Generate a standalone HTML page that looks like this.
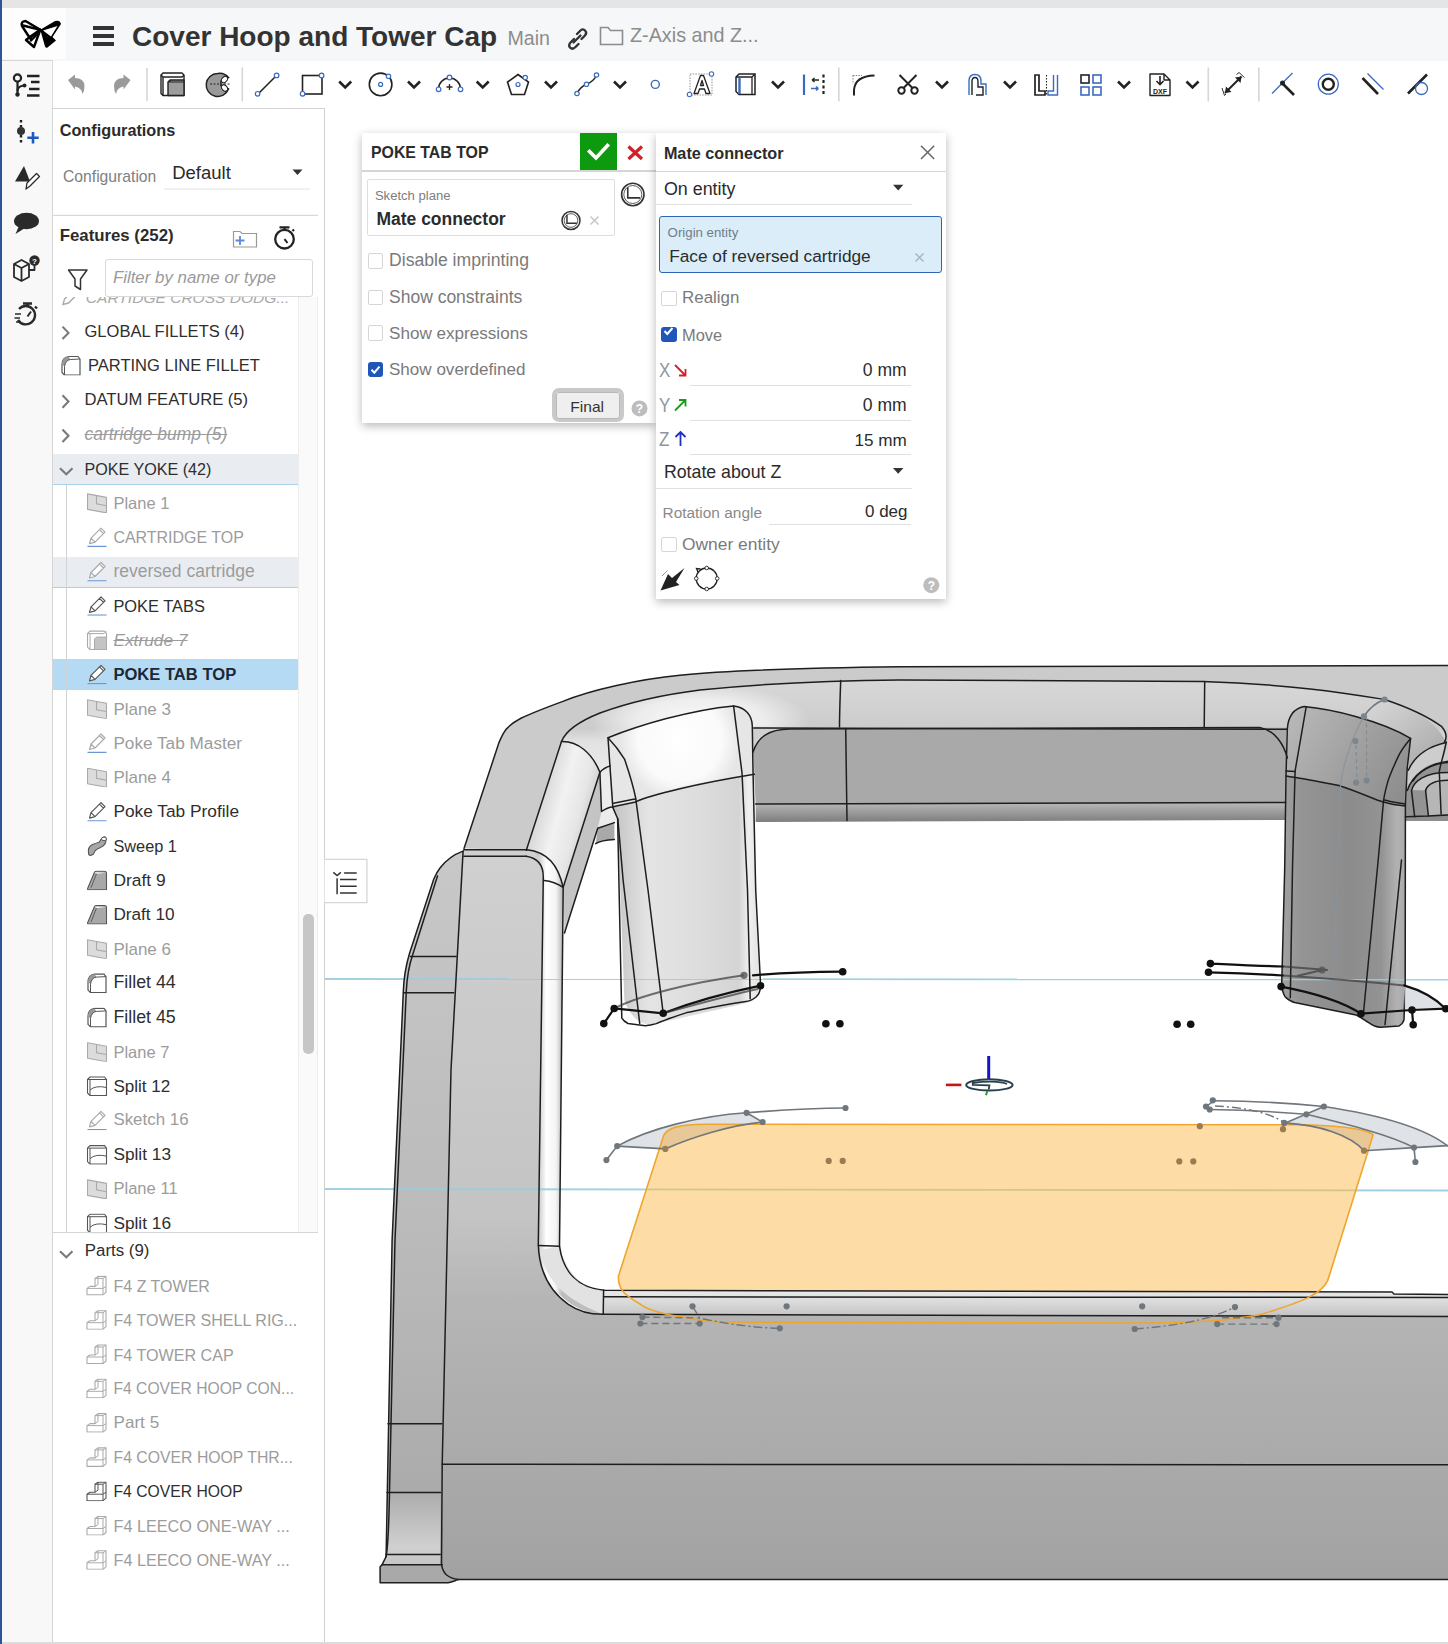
<!DOCTYPE html>
<html><head><meta charset="utf-8"><style>
html,body{margin:0;padding:0;}
body{width:1448px;height:1644px;overflow:hidden;position:relative;background:#fff;font-family:"Liberation Sans",sans-serif;}
.a{position:absolute;box-sizing:border-box;}
.t{position:absolute;white-space:nowrap;line-height:1;}
svg{position:absolute;overflow:visible;}
</style></head><body>
<div class="a" style="left:0px;top:0px;width:1448px;height:8px;background:#e5e5e5;"></div>
<div class="a" style="left:0px;top:8px;width:1448px;height:53px;background:#f6f7f9;"></div>
<div class="a" style="left:2px;top:8px;width:64px;height:51px;background:#fdfdfd;"></div>
<div class="a" style="left:0px;top:60px;width:53px;height:1584px;background:#f8f8f8;border-right:1px solid #dcdcdc;border-top:1px solid #d6d6d6;"></div>
<div class="a" style="left:53px;top:61px;width:1395px;height:48px;background:#fff;"></div>
<div class="a" style="left:52px;top:108px;width:273px;height:1536px;background:#fff;border:1px solid #d4d4d4;border-bottom:none;"></div>
<div class="a" style="left:324px;top:108px;width:1px;height:1536px;background:#d0d0d0;"></div>
<div class="a" style="left:2px;top:1642px;width:1446px;height:2px;background:#dcdcdc;"></div>
<div class="a" style="left:0px;top:0px;width:2px;height:1644px;background:#2c5797;"></div>
<svg style="left:0;top:60px" width="53" height="280" viewBox="0 60 53 280">
<!-- feature tree icon -->
<g fill="none" stroke="#222" stroke-width="2.2">
<circle cx="17.5" cy="78" r="3.6"/>
<path d="M17.5,81.6 L17.5,94.5"/>
<path d="M17.5,91 Q17.5,86 24,85.5" />
</g>
<circle cx="17.5" cy="94.5" r="2.2" fill="#222"/>
<circle cx="24.5" cy="85.5" r="2" fill="#222"/>
<g stroke="#222" stroke-width="2.4">
<path d="M27,76 L39.5,76 M31,82 L39.5,82 M29,89 L39.5,89 M27,95.5 L39.5,95.5"/>
</g>
<!-- config -->
<path d="M21,120 L21,143" stroke="#222" stroke-width="2.4" stroke-dasharray="2.5,2.5"/>
<circle cx="21" cy="131" r="4" fill="#333"/>
<path d="M33,132 L33,143.5 M27.3,137.8 L38.7,137.8" stroke="#1a5ac4" stroke-width="2.6"/>
<!-- triangle + pencil -->
<path d="M24,166 L15,181.5 L30,181.5 Z" fill="#2a2a2a"/>
<path d="M26,189 L27,183 L36.5,173.5 L39.5,176.5 L30,186 Z" fill="#fff" stroke="#2a2a2a" stroke-width="1.3" stroke-linejoin="round"/>
<!-- comment -->
<ellipse cx="26.5" cy="221" rx="12.5" ry="8.3" fill="#2a2a2a"/>
<path d="M19,226 L15.5,234 L25,228 Z" fill="#2a2a2a"/>
<!-- cube ? -->
<g fill="none" stroke="#2a2a2a" stroke-width="1.8" stroke-linejoin="round">
<path d="M14,264 L21.5,260 L29,264 L29,277 L21.5,281 L14,277 Z"/>
<path d="M14,264 L21.5,268 L29,264 M21.5,268 L21.5,281"/>
<path d="M29,270 L34.5,270 L34.5,265"/>
</g>
<circle cx="34.5" cy="260.5" r="5.2" fill="#2a2a2a"/>
<text x="34.5" y="263.8" font-family="Liberation Sans" font-size="8" font-weight="bold" text-anchor="middle" fill="#fff">?</text>
<!-- timer -->
<g fill="none" stroke="#2a2a2a" stroke-width="2.4">
<path d="M19,309 A9.2,9.2 0 1 1 18,320"/>
<path d="M23,303.5 L32,303.5 M27.5,303.5 L27.5,307"/>
<path d="M35,306.5 L37,308.5"/>
</g>
<path d="M27.5,316.5 L31,311.5" stroke="#2a2a2a" stroke-width="2"/>
<path d="M15,314 L21,314 M14.5,318 L20,318 M16,322 L20.5,322" stroke="#2a2a2a" stroke-width="1.4"/>
</svg>
<svg style="left:0;top:0" width="80" height="60" viewBox="0 0 80 60">
<g fill="none" stroke="#000" stroke-width="2.4" stroke-linejoin="round" stroke-linecap="round">
<path d="M22,26 Q20.5,21.5 25.5,21 L40.3,29.8 L29.8,38 Z"/>
<path d="M23,25.5 L40.3,29.8"/>
<path d="M26,40 L30.5,36.5 L40.3,29.8 L34,47 Z"/>
<path d="M30.5,36.5 L31,40.5 L38.5,33"/>
</g>
<path d="M40.3,29.8 L55,21 Q60,19.5 61,24 L52.5,37 L56,40.5 L47.5,47.5 Q46,48.5 45,46.5 Z" fill="#000"/>
<path d="M43,30.5 L57.5,26 L51,36.5 Z" fill="#fff"/>
</svg>
<div class="a" style="left:93px;top:26px;width:21px;height:4px;background:#333;"></div>
<div class="a" style="left:93px;top:34px;width:21px;height:4px;background:#333;"></div>
<div class="a" style="left:93px;top:42px;width:21px;height:4px;background:#333;"></div>
<div class="t" style="left:132px;top:22.5px;font-size:28px;color:#333;font-weight:bold;font-style:normal;">Cover Hoop and Tower Cap</div>
<div class="t" style="left:507.5px;top:29.4px;font-size:19.6px;color:#8c8c8c;font-weight:normal;font-style:normal;">Main</div>
<svg style="left:560px;top:22px" width="32" height="30" viewBox="0 0 32 30">
<g fill="none" stroke="#333" stroke-width="2.4" stroke-linecap="round">
<path d="M17,12 L20,9 Q23,6 25,8.5 Q27.5,11 24.5,14 L21.5,17"/>
<path d="M14,17 L11,20 Q8,23 10,25.5 Q12.5,28 15.5,25 L18.5,22"/>
<path d="M13.5,20.5 L20.5,13.5"/>
</g></svg>
<svg style="left:598px;top:24px" width="28" height="24" viewBox="0 0 28 24">
<path d="M2.5,3.5 L10,3.5 L12.5,6.5 L24.5,6.5 L24.5,20.5 L2.5,20.5 Z" fill="none" stroke="#8c8c8c" stroke-width="1.6"/>
</svg>
<div class="t" style="left:630px;top:25.7px;font-size:19.8px;color:#8c8c8c;font-weight:normal;font-style:normal;">Z-Axis and Z...</div>
<div class="t" style="left:59.7px;top:122.2px;font-size:16.26px;color:#2b2b2b;font-weight:bold;font-style:normal;">Configurations</div>
<div class="t" style="left:63px;top:168.7px;font-size:15.7px;color:#808080;font-weight:normal;font-style:normal;">Configuration</div>
<div class="t" style="left:172.2px;top:163.9px;font-size:18.53px;color:#2b2b2b;font-weight:normal;font-style:normal;">Default</div>
<svg style="left:0;top:0" width="330" height="300" viewBox="0 0 330 300"><path d="M292.5,169.5 L302.5,169.5 L297.5,175 Z" fill="#333"/><rect x="164" y="188.5" width="146" height="1" fill="#e2e2e2"/><rect x="52" y="214.8" width="266" height="1.2" fill="#d8d8d8"/><path d="M233.5,231.5 L240,231.5 L242,233.5 L256.5,233.5 L256.5,247 L233.5,247 Z" fill="none" stroke="#9a9a9a" stroke-width="1.2"/><path d="M240,236 L240,245 M235.5,240.5 L244.5,240.5" stroke="#5a8ad8" stroke-width="1.8"/><g fill="none" stroke="#222" stroke-width="2.3"><circle cx="284.5" cy="239.2" r="9.3"/><path d="M279.5,227.3 L289.5,227.3 M284.5,227.3 L284.5,230"/><path d="M292.5,229.5 L294,231"/></g><path d="M284.5,239.2 L287.5,243" stroke="#222" stroke-width="2"/><path d="M68.5,270 L87,270 L80.5,279 L80.5,289.5 L75,286 L75,279 Z" fill="none" stroke="#333" stroke-width="1.5" stroke-linejoin="round"/></svg>
<div class="t" style="left:59.7px;top:228.2px;font-size:16.81px;color:#2b2b2b;font-weight:bold;font-style:normal;">Features (252)</div>
<div class="a" style="left:105px;top:258.5px;width:208px;height:38px;border:1px solid #d9d9d9;border-radius:3px;background:#fff;"></div>
<div class="t" style="left:112.9px;top:269.7px;font-size:16.86px;color:#9a9a9a;font-weight:normal;font-style:italic;">Filter by name or type</div>
<div class="a" style="left:52.5px;top:453.6px;width:246px;height:30.8px;background:#e9edf1;"></div>
<div class="a" style="left:52.5px;top:484.0px;width:246px;height:1.2px;background:#a9d2ec;"></div>
<div class="a" style="left:52.5px;top:556.5px;width:246px;height:30.8px;background:#e9edf1;"></div>
<div class="a" style="left:52.5px;top:586.9000000000001px;width:246px;height:1.2px;background:#a9d2ec;"></div>
<div class="a" style="left:52.5px;top:659.4px;width:246px;height:30.8px;background:#b5daf4;"></div>
<div class="a" style="left:65.5px;top:485.2px;width:1.1px;height:747.3px;background:#cfd3d6;"></div>
<div class="t" style="left:84.5px;top:323.6px;font-size:16.53px;color:#2e2e2e;font-weight:normal;font-style:normal;">GLOBAL FILLETS (4)</div>
<div class="t" style="left:88px;top:357.9px;font-size:16.52px;color:#2e2e2e;font-weight:normal;font-style:normal;">PARTING LINE FILLET</div>
<div class="t" style="left:84.5px;top:392.1px;font-size:16.61px;color:#2e2e2e;font-weight:normal;font-style:normal;">DATUM FEATURE (5)</div>
<div class="t" style="left:84.5px;top:425.7px;font-size:17.48px;color:#9c9c9c;font-weight:normal;font-style:italic;text-decoration:line-through;">cartridge bump (5)</div>
<div class="t" style="left:84.5px;top:461.2px;font-size:16.12px;color:#2e2e2e;font-weight:normal;font-style:normal;">POKE YOKE (42)</div>
<div class="t" style="left:113.4px;top:495.1px;font-size:16.51px;color:#9c9c9c;font-weight:normal;font-style:normal;">Plane 1</div>
<div class="t" style="left:113.4px;top:529.9px;font-size:15.98px;color:#9c9c9c;font-weight:normal;font-style:normal;">CARTRIDGE TOP</div>
<div class="t" style="left:113.4px;top:562.8px;font-size:17.55px;color:#9c9c9c;font-weight:normal;font-style:normal;">reversed cartridge</div>
<div class="t" style="left:113.4px;top:598.1px;font-size:16.43px;color:#2e2e2e;font-weight:normal;font-style:normal;">POKE TABS</div>
<div class="t" style="left:113.4px;top:631.6px;font-size:17.34px;color:#9c9c9c;font-weight:normal;font-style:italic;text-decoration:line-through;">Extrude 7</div>
<div class="t" style="left:113.4px;top:666.6px;font-size:16.59px;color:#1c2833;font-weight:bold;font-style:normal;">POKE TAB TOP</div>
<div class="t" style="left:113.4px;top:700.5px;font-size:16.98px;color:#9c9c9c;font-weight:normal;font-style:normal;">Plane 3</div>
<div class="t" style="left:113.4px;top:734.6px;font-size:17.21px;color:#9c9c9c;font-weight:normal;font-style:normal;">Poke Tab Master</div>
<div class="t" style="left:113.4px;top:769.1px;font-size:16.98px;color:#9c9c9c;font-weight:normal;font-style:normal;">Plane 4</div>
<div class="t" style="left:113.4px;top:803.1px;font-size:17.31px;color:#2e2e2e;font-weight:normal;font-style:normal;">Poke Tab Profile</div>
<div class="t" style="left:113.4px;top:838.3px;font-size:16.34px;color:#2e2e2e;font-weight:normal;font-style:normal;">Sweep 1</div>
<div class="t" style="left:113.4px;top:871.7px;font-size:17.4px;color:#2e2e2e;font-weight:normal;font-style:normal;">Draft 9</div>
<div class="t" style="left:113.4px;top:906.1px;font-size:17.21px;color:#2e2e2e;font-weight:normal;font-style:normal;">Draft 10</div>
<div class="t" style="left:113.4px;top:940.6px;font-size:16.98px;color:#9c9c9c;font-weight:normal;font-style:normal;">Plane 6</div>
<div class="t" style="left:113.4px;top:974.2px;font-size:17.82px;color:#2e2e2e;font-weight:normal;font-style:normal;">Fillet 44</div>
<div class="t" style="left:113.4px;top:1008.5px;font-size:17.82px;color:#2e2e2e;font-weight:normal;font-style:normal;">Fillet 45</div>
<div class="t" style="left:113.4px;top:1043.9px;font-size:16.51px;color:#9c9c9c;font-weight:normal;font-style:normal;">Plane 7</div>
<div class="t" style="left:113.4px;top:1077.8px;font-size:17.06px;color:#2e2e2e;font-weight:normal;font-style:normal;">Split 12</div>
<div class="t" style="left:113.4px;top:1112.2px;font-size:16.91px;color:#9c9c9c;font-weight:normal;font-style:normal;">Sketch 16</div>
<div class="t" style="left:113.4px;top:1146.2px;font-size:17.27px;color:#2e2e2e;font-weight:normal;font-style:normal;">Split 13</div>
<div class="t" style="left:113.4px;top:1181.1px;font-size:16.58px;color:#9c9c9c;font-weight:normal;font-style:normal;">Plane 11</div>
<div class="t" style="left:113.4px;top:1214.8px;font-size:17.27px;color:#2e2e2e;font-weight:normal;font-style:normal;">Split 16</div>
<svg style="left:0;top:0" width="330" height="1644" viewBox="0 0 330 1644"><defs>
<symbol id="i_chev" viewBox="0 0 21 20"><path d="M2.5,3.5 L8.5,9.8 L2.5,16" fill="none" stroke="#7a7a7a" stroke-width="2.1"/></symbol>
<symbol id="i_chevd" viewBox="0 0 21 20"><path d="M1,8 L7.3,14 L13.5,8" fill="none" stroke="#7a7a7a" stroke-width="2.1"/></symbol>
<symbol id="i_fillet" viewBox="0 0 21 20"><path d="M1.5,17 L1.5,9 Q1.5,2 8,1 L17.5,1 L19.5,3.5 L19.5,19.5 L4,19.5 Z" fill="#fff" stroke="#555" stroke-width="1.2" stroke-linejoin="round"/><path d="M1.5,9 Q1.5,2 8,1 L10,4 Q5,5 4,11 Z" fill="#999"/><path d="M4,19.5 L4,11 Q5,4.5 10,4 L19.5,3.5" fill="none" stroke="#555" stroke-width="1"/></symbol>
<symbol id="i_plane" viewBox="0 0 21 20"><path d="M1,1 L20,4.5 L20,20 L1,16.5 Z" fill="#dcdcdc" stroke="#aaa" stroke-width="1.1" stroke-linejoin="round"/><path d="M10,2.8 L10,11 L20,12.8" fill="none" stroke="#aaa" stroke-width="1.1"/></symbol>
<symbol id="i_pencil" viewBox="0 0 21 20"><path d="M3,16.5 L4.5,11 L14.5,1 L18.5,5 L8.5,15 Z M4.5,11 L8.5,15 M13,2.5 L17,6.5" fill="#fff" stroke="currentColor" stroke-width="1.2" stroke-linejoin="round"/><path d="M1,19.3 L20,19.3" stroke="#6b97d6" stroke-width="1.3"/></symbol>
<symbol id="i_extrude" viewBox="0 0 21 20"><path d="M1,3.5 L3.5,1 L17.5,1 L20,3.5 L20,19.5 L3.5,19.5 L1,17 Z" fill="#fff" stroke="#aaa" stroke-width="1.1"/><path d="M1,3.5 L17.5,3.5 L20,1 M3.5,3.5 L3.5,19.5" fill="none" stroke="#aaa" stroke-width="1"/><path d="M8,9 L10,7 L20,7 L20,19.5 L8,19.5 Z" fill="#c4c4c4" stroke="#aaa" stroke-width="1"/></symbol>
<symbol id="i_sweep" viewBox="0 0 21 20"><path d="M2,17 Q1,11 6,8.5 Q10,7 13,6 Q14.5,2 17.5,1 Q20,1 19.5,4 Q19.5,9 14,11.5 Q10,13 8.5,15 Q7,19.5 4,19.5 Q2,19.5 2,17 Z" fill="#a6a6a6" stroke="#555" stroke-width="1.1"/><ellipse cx="17.5" cy="3" rx="2.5" ry="1.8" fill="#fff" stroke="#555" stroke-width="1"/></symbol>
<symbol id="i_draft" viewBox="0 0 21 20"><path d="M1,18.5 L8,2 Q8.5,1 10,1 L18,1 Q20,1 20,3 L20,19.5 L3,19.5 Q0.5,19.5 1,18.5 Z" fill="#a8a8a8" stroke="#555" stroke-width="1.1" stroke-linejoin="round"/><path d="M8,2 L19.5,2.5 L10,3.5 Z" fill="#fff"/><path d="M4.5,17.5 L10,3.5" stroke="#555" stroke-width="0.9"/></symbol>
<symbol id="i_split" viewBox="0 0 21 20"><path d="M1,3.5 L3.5,1 L18,1 L20,3.5 L20,19.5 L3.5,19.5 L1,17 Z" fill="#fff" stroke="#555" stroke-width="1.1"/><path d="M1,3.5 L20,3.5 M3.5,3.5 L3.5,19.5 M3.5,14 Q9,9 20,11.5" fill="none" stroke="#555" stroke-width="1"/></symbol>
<symbol id="i_part" viewBox="0 0 21 20"><path d="M1,13 L4,11 L9,11 L9,3 L12,1 L20,1 L20,17 L17,19.5 L1,19.5 Z" fill="#fff" stroke="currentColor" stroke-width="1.1" stroke-linejoin="round"/><path d="M1,13 L17,13 M17,13 L17,19.5 M17,13 L20,11 M9,11 L12,9 L12,3.5 M12,1 L12,3.5 M9,3 L17,3 L20,1 M17,3 L17,13" fill="none" stroke="currentColor" stroke-width="1"/></symbol>
</defs><use href="#i_chev" x="60" y="323.1" width="21" height="20"/><use href="#i_fillet" x="60.5" y="355.50000000000006" width="21" height="20" style="color:#555"/><use href="#i_chev" x="60" y="391.70000000000005" width="21" height="20"/><use href="#i_chev" x="60" y="426.0" width="21" height="20"/><use href="#i_chevd" x="59" y="460.3" width="21" height="20"/><use href="#i_plane" x="86.5" y="492.90000000000003" width="21" height="20" style="color:#aaa"/><use href="#i_pencil" x="86.5" y="527.1999999999999" width="21" height="20" style="color:#aaa"/><use href="#i_pencil" x="86.5" y="561.5" width="21" height="20" style="color:#aaa"/><use href="#i_pencil" x="86.5" y="595.8" width="21" height="20" style="color:#555"/><use href="#i_extrude" x="86.5" y="630.0999999999999" width="21" height="20" style="color:#aaa"/><use href="#i_pencil" x="86.5" y="664.4" width="21" height="20" style="color:#555"/><use href="#i_plane" x="86.5" y="698.6999999999999" width="21" height="20" style="color:#aaa"/><use href="#i_pencil" x="86.5" y="733.0" width="21" height="20" style="color:#aaa"/><use href="#i_plane" x="86.5" y="767.3" width="21" height="20" style="color:#aaa"/><use href="#i_pencil" x="86.5" y="801.5999999999999" width="21" height="20" style="color:#555"/><use href="#i_sweep" x="86.5" y="835.9" width="21" height="20" style="color:#555"/><use href="#i_draft" x="86.5" y="870.1999999999999" width="21" height="20" style="color:#555"/><use href="#i_draft" x="86.5" y="904.4999999999999" width="21" height="20" style="color:#555"/><use href="#i_plane" x="86.5" y="938.8" width="21" height="20" style="color:#aaa"/><use href="#i_fillet" x="86.5" y="973.0999999999999" width="21" height="20" style="color:#555"/><use href="#i_fillet" x="86.5" y="1007.4" width="21" height="20" style="color:#555"/><use href="#i_plane" x="86.5" y="1041.7" width="21" height="20" style="color:#aaa"/><use href="#i_split" x="86.5" y="1075.9999999999998" width="21" height="20" style="color:#555"/><use href="#i_pencil" x="86.5" y="1110.3" width="21" height="20" style="color:#aaa"/><use href="#i_split" x="86.5" y="1144.6" width="21" height="20" style="color:#555"/><use href="#i_plane" x="86.5" y="1178.8999999999999" width="21" height="20" style="color:#aaa"/><use href="#i_split" x="86.5" y="1213.2" width="21" height="20" style="color:#555"/></svg>
<div class="a" style="left:53px;top:296.5px;width:245px;height:12px;overflow:hidden"><svg style="left:7px;top:-9px" width="24" height="24" viewBox="0 0 24 24"><path d="M3,16.5 L4.5,11 L14.5,1 L18.5,5 L8.5,15 Z" fill="#fff" stroke="#aaa" stroke-width="1.4"/></svg><div class="t" style="left:32.8px;top:-6.1px;font-size:15.56px;color:#aaa;font-weight:normal;font-style:italic;">CARTIDGE CROSS DODG...</div>
</div>
<div class="a" style="left:298px;top:296.5px;width:19.5px;height:936px;background:#fafafa;border-left:1px solid #ececec;border-right:1px solid #ececec;"></div>
<div class="a" style="left:303px;top:913.5px;width:10.5px;height:140px;background:#c6c6c6;border-radius:5px;"></div>
<div class="a" style="left:52.5px;top:1232.3px;width:265.5px;height:1.2px;background:#d4d4d4;"></div>
<svg style="left:0;top:0" width="330" height="1644" viewBox="0 0 330 1644"><use href="#i_chevd" x="59" y="1243.2" width="21" height="20"/><use href="#i_part" x="86" y="1275.3999999999999" width="21" height="20" style="color:#aaa"/><use href="#i_part" x="86" y="1309.6999999999998" width="21" height="20" style="color:#aaa"/><use href="#i_part" x="86" y="1343.9999999999998" width="21" height="20" style="color:#aaa"/><use href="#i_part" x="86" y="1378.3" width="21" height="20" style="color:#aaa"/><use href="#i_part" x="86" y="1412.6" width="21" height="20" style="color:#aaa"/><use href="#i_part" x="86" y="1446.8999999999999" width="21" height="20" style="color:#aaa"/><use href="#i_part" x="86" y="1481.1999999999998" width="21" height="20" style="color:#555"/><use href="#i_part" x="86" y="1515.4999999999998" width="21" height="20" style="color:#aaa"/><use href="#i_part" x="86" y="1549.8" width="21" height="20" style="color:#aaa"/></svg>
<div class="t" style="left:84.8px;top:1243.4px;font-size:16.85px;color:#2e2e2e;font-weight:normal;font-style:normal;">Parts (9)</div>
<div class="t" style="left:113.5px;top:1278.0px;font-size:16.03px;color:#9c9c9c;font-weight:normal;font-style:normal;">F4 Z TOWER</div>
<div class="t" style="left:113.5px;top:1312.3px;font-size:16.08px;color:#9c9c9c;font-weight:normal;font-style:normal;">F4 TOWER SHELL RIG...</div>
<div class="t" style="left:113.5px;top:1346.5px;font-size:16.13px;color:#9c9c9c;font-weight:normal;font-style:normal;">F4 TOWER CAP</div>
<div class="t" style="left:113.5px;top:1381.2px;font-size:15.67px;color:#9c9c9c;font-weight:normal;font-style:normal;">F4 COVER HOOP CON...</div>
<div class="t" style="left:113.5px;top:1414.3px;font-size:17.13px;color:#9c9c9c;font-weight:normal;font-style:normal;">Part 5</div>
<div class="t" style="left:113.5px;top:1449.7px;font-size:15.8px;color:#9c9c9c;font-weight:normal;font-style:normal;">F4 COVER HOOP THR...</div>
<div class="t" style="left:113.5px;top:1484.1px;font-size:15.71px;color:#2e2e2e;font-weight:normal;font-style:normal;">F4 COVER HOOP</div>
<div class="t" style="left:113.5px;top:1518.0px;font-size:16.23px;color:#9c9c9c;font-weight:normal;font-style:normal;">F4 LEECO ONE-WAY ...</div>
<div class="t" style="left:113.5px;top:1552.3px;font-size:16.23px;color:#9c9c9c;font-weight:normal;font-style:normal;">F4 LEECO ONE-WAY ...</div>
<svg style="left:0;top:0" width="1448" height="1644" viewBox="0 0 1448 1644">
<defs>
<linearGradient id="gFront" x1="0" y1="1316" x2="0" y2="1580" gradientUnits="userSpaceOnUse">
<stop offset="0" stop-color="#c6c6c6"/><stop offset="0.55" stop-color="#aaaaaa"/><stop offset="1" stop-color="#a2a2a2"/></linearGradient>
<linearGradient id="gPillar" x1="0" y1="850" x2="0" y2="1580" gradientUnits="userSpaceOnUse">
<stop offset="0" stop-color="#d0d0d0"/><stop offset="0.5" stop-color="#c4c4c4"/><stop offset="0.62" stop-color="#b5b5b5"/><stop offset="1" stop-color="#a2a2a2"/></linearGradient>
<linearGradient id="gSide" x1="0" y1="850" x2="0" y2="1580" gradientUnits="userSpaceOnUse">
<stop offset="0" stop-color="#c8c8c8"/><stop offset="0.6" stop-color="#b8b8b8"/><stop offset="1" stop-color="#a5a5a5"/></linearGradient>
<linearGradient id="gLipV" x1="538" y1="0" x2="562" y2="0" gradientUnits="userSpaceOnUse">
<stop offset="0" stop-color="#c8c8c8"/><stop offset="0.35" stop-color="#ffffff"/><stop offset="0.75" stop-color="#f4f4f4"/><stop offset="1" stop-color="#bdbdbd"/></linearGradient>
<linearGradient id="gLipH" x1="0" y1="1292" x2="0" y2="1317" gradientUnits="userSpaceOnUse">
<stop offset="0" stop-color="#e8e8e8"/><stop offset="0.4" stop-color="#dadada"/><stop offset="1" stop-color="#c2c2c2"/></linearGradient>
<linearGradient id="gBackStrip" x1="0" y1="803" x2="0" y2="821" gradientUnits="userSpaceOnUse">
<stop offset="0" stop-color="#b8b8b8"/><stop offset="1" stop-color="#808080"/></linearGradient>
<linearGradient id="gRim" x1="0" y1="680" x2="0" y2="780" gradientUnits="userSpaceOnUse">
<stop offset="0" stop-color="#d8d8d8"/><stop offset="0.25" stop-color="#d2d2d2"/><stop offset="0.48" stop-color="#cbcbcb"/><stop offset="0.62" stop-color="#e2e2e2"/><stop offset="1" stop-color="#ececec"/></linearGradient>
<radialGradient id="gRimHi" cx="700" cy="722" r="110" gradientTransform="translate(700 722) scale(1 0.35) translate(-700 -722)" gradientUnits="userSpaceOnUse">
<stop offset="0" stop-color="#ffffff" stop-opacity="0.95"/><stop offset="0.6" stop-color="#ffffff" stop-opacity="0.6"/><stop offset="1" stop-color="#ffffff" stop-opacity="0"/></radialGradient>
<linearGradient id="gTowerL" x1="612" y1="0" x2="756" y2="0" gradientUnits="userSpaceOnUse">
<stop offset="0" stop-color="#c2c2c2"/><stop offset="0.25" stop-color="#e4e4e4"/><stop offset="0.6" stop-color="#dddddd"/><stop offset="0.88" stop-color="#d4d4d4"/><stop offset="0.95" stop-color="#f0f0f0"/><stop offset="1" stop-color="#e6e6e6"/></linearGradient>
<linearGradient id="gTowerR" x1="1282" y1="0" x2="1406" y2="0" gradientUnits="userSpaceOnUse">
<stop offset="0" stop-color="#a2a2a2"/><stop offset="0.15" stop-color="#949494"/><stop offset="0.55" stop-color="#8c8c8c"/><stop offset="0.8" stop-color="#939393"/><stop offset="0.93" stop-color="#b2b2b2"/><stop offset="1" stop-color="#a8a8a8"/></linearGradient>
<linearGradient id="gRimL" x1="530" y1="820" x2="585" y2="835" gradientUnits="userSpaceOnUse">
<stop offset="0" stop-color="#d2d2d2"/><stop offset="0.45" stop-color="#f2f2f2"/><stop offset="0.8" stop-color="#e6e6e6"/><stop offset="1" stop-color="#cfcfcf"/></linearGradient>
<linearGradient id="gFoot" x1="0" y1="1492" x2="0" y2="1565" gradientUnits="userSpaceOnUse">
<stop offset="0" stop-color="#acacac"/><stop offset="0.75" stop-color="#d0d0d0"/><stop offset="1" stop-color="#c4c4c4"/></linearGradient>
<linearGradient id="gRStr" x1="1385" y1="705" x2="1440" y2="775" gradientUnits="userSpaceOnUse">
<stop offset="0" stop-color="#d2d2d2"/><stop offset="1" stop-color="#a4a4a4"/></linearGradient>
<linearGradient id="gTowerRTop" x1="1290" y1="715" x2="1405" y2="790" gradientUnits="userSpaceOnUse">
<stop offset="0" stop-color="#b8b8b8"/><stop offset="0.5" stop-color="#a2a2a2"/><stop offset="1" stop-color="#8e8e8e"/></linearGradient>
<radialGradient id="gTopL" cx="680" cy="740" r="60" gradientUnits="userSpaceOnUse">
<stop offset="0" stop-color="#ffffff"/><stop offset="0.7" stop-color="#fafafa"/><stop offset="1" stop-color="#e6e6e6"/></radialGradient>
<clipPath id="cOrange"><path d="M663.5,1136 C667,1128 678,1124.3 705,1124.2 L1297.4,1124.7 C1330,1125 1365,1128 1373.1,1134.9 L1327.7,1280.6 C1322,1292 1310,1300 1259.6,1314.7 C1230,1320 1210,1322.2 1150,1323 L720.5,1322 C680,1318 650,1312 640.4,1304.3 C625,1295 618,1290 618.4,1276.3 Z"/></clipPath>
<clipPath id="cOpen"><path d="M559.5,887 L1448,818 L1448,1291.5 L1394,1291.5 L604.4,1290.3 C585,1289 570,1280 559.5,1246.2 Z"/></clipPath>
</defs>
<path d="M1448,665.5 L900,666.8 C800,668 720,671 680,675.2 C640,679 590,690 562.9,701.4 C545,708 530,714 521.4,718 C512,723 506,728 503.5,733.2 C501,738 499.5,741 498.5,744 L464,848.5 L526.3,850.3 L561.5,741.5 C566,730 580,721 600,713 C630,702 660,695 700,690 C760,684 830,680.5 900,680 L1202.8,681.6 C1290,684 1350,694 1384.6,699.5 C1410,708 1430,718 1441.8,726.7 C1447,733 1447,738 1444.4,742.3 L1448,750 Z" fill="#cbcbcb"/>
<path d="M561.5,741.5 C566,730 580,721 600,713 C630,702 660,695 700,690 C760,684 830,680.5 900,680 L1202.8,681.6 C1290,684 1350,694 1384.6,699.5 C1410,708 1430,718 1441.8,726.7 C1447,733 1447,738 1444.4,742.3 L1448,750 L1448,820 L1286,820 L1286,738 L1259.6,729 L756.6,728 L753,725 L608,737.7 L612.8,807.4 L617.6,818.5 L614.4,822.6 L597.8,828.2 L563.2,887.3 C561,872 553,858 527,850.3 Z" fill="url(#gRim)"/>
<path d="M561.5,741.5 C578,741 592,753 599.9,772.2 L563.2,887.3 C561,872 553,858 527,850.3 Z" fill="url(#gRimL)"/>
<path d="M561.5,741.5 C566,730 580,721 600,713 C630,702 660,695 700,690 C760,684 830,680.5 900,680 L900,728 L756.6,728 L608,737.7 L600,760 Z" fill="url(#gRimHi)"/>
<path d="M563.2,932 L596,843 L615,835 L754,821 L1448,818 L1448,1294 L604.4,1290.3 C585,1289 570,1280 559.5,1246.2 L560,930 Z" fill="#ffffff"/>
<path d="M752,726.5 L795,728 C775,729 760,735 753,754 Z" fill="#d0d0d0"/>
<path d="M753,752 C760,735 770,729.4 790,729 L1286,727.8 L1286,803 L755.7,804.6 Z" fill="#a9a9a9"/>
<path d="M755.7,803.3 L1286,802.5 L1286,820 L755.7,822 Z" fill="url(#gBackStrip)"/>
<path d="M597.8,828.2 L614.4,822.6 L614.4,839.6 C607,840 600,841 595.7,843.7 Z" fill="#a9a9a9"/>
<path d="M563.2,887.3 L599.9,772.2 L601.5,811.5 L597.8,828.2 L564.5,933 Z" fill="#c4c4c4"/>
<path d="M463.1,851.1 C455,854 446,860 440,868 C438,870.5 436,874 433.8,879 L409.4,953.8 C407,962 404,975 403.4,990 L392.1,1240.2 L386.1,1556.6 L382.1,1564.7 L380.1,1566.7 L380.1,1582.7 L448.2,1582.7 L441.5,1564.7 L442.2,1464.5 L451,1070 Z" fill="url(#gSide)"/>
<path d="M387,1492.6 L440.5,1492.6 L440.2,1564.7 L382.1,1564.7 L386.1,1556.6 Z" fill="url(#gFoot)"/>
<path d="M382.1,1564.7 L442.2,1564.7 C446,1574 452,1578.5 460,1579.6 L455,1580.5 C452,1582 450,1582.7 448.2,1582.7 L380.1,1582.7 L380.1,1566.7 Z" fill="#a9a9a9"/>
<path d="M463.9,849.7 L527,849.7 C545,852 543.3,862 543.3,877 L538.3,1244.2 C540,1270 548,1290 568.3,1304.3 C580,1312 590,1314.3 602.4,1314.3 L1448,1316.6 L1448,1579.6 L458,1579.6 C450,1578 443,1572 441.5,1564.7 L442.2,1464.5 L451,1070 L463.1,851.1 Z" fill="url(#gPillar)"/>
<path d="M527,849.7 C547.7,852 558,865 563.2,887.3 L559.5,1246.2 C565,1275 580,1288 604.4,1290.3 L1448,1294 L1448,1316.6 L602.4,1314.3 C580,1313 560,1300 548,1280 C541,1265 538.3,1255 538.3,1244.2 L543.3,877 C543,860 537,852 527,849.7 Z" fill="url(#gLipV)"/>
<path d="M603.6,1290.3 L1448,1294 L1448,1316.6 L603.6,1314.3 Z" fill="url(#gLipH)"/>
<path d="M540,1250 C545,1280 565,1300 603.6,1314.3 L603.6,1290.3 C585,1288 568,1278 559.5,1246.2 Z" fill="#e2e2e2"/>
<path d="M608,737.7 C640,725 690,710 733.6,705.9 C745,707 752,715 752.3,725.9 L753,770 L755.7,890 L760.6,988.5 C760,998 752,1002 748.6,1002.5 L652.5,1024.5 C642,1025 632,1020 624.4,1000.5 L617.6,818.5 L612.8,807.4 Z" fill="url(#gTowerL)"/>
<path d="M608,737.7 C640,725 690,710 733.6,705.9 C745,707 752,715 752.3,725.9 L754.4,774.3 C700,782 660,790 635.6,801.9 L613.5,806.7 Z" fill="url(#gTopL)"/>
<path d="M1287.3,729.3 C1288,718 1292,709 1304.1,706.6 C1330,709 1380,720 1410.6,738.4 L1407.2,768.7 L1405.4,806 L1405.2,983 L1404,1019.8 C1403.5,1022 1402,1024 1399.1,1026 L1380.6,1027.2 C1376,1027 1372,1025 1368.3,1022.3 C1366,1021 1362,1018 1356,1014.9 L1294.6,1002.6 C1292,1002 1290,1001 1286,997.7 C1285,997 1282,992 1281.7,985.4 L1284.7,868 L1286,776 Z" fill="url(#gTowerR)"/>
<path d="M1287.3,729.3 C1288,718 1292,709 1304.1,706.6 C1330,709 1380,720 1410.6,738.4 L1407.2,768.7 L1405.4,806 C1400,805.5 1390,804 1383.3,802 C1375,800 1360,792 1337.9,785.2 C1320,782 1300,778 1286,776.1 Z" fill="url(#gTowerRTop)"/>
<path d="M1410.6,738.4 L1363.9,716.4 L1384.6,699.5 C1410,706 1435,720 1446.2,742 L1448,742 L1448,820 L1405,820 Z" fill="url(#gRStr)"/>
<path d="M1408.3,770.3 C1415,755 1430,746 1446.2,742.5 L1448,742.5 L1448,761.2 C1430,762 1416,768 1407.4,790.4 Z" fill="#cdcdcd"/>
<path d="M1407.4,790.4 C1412,775 1428,764 1448,761.2 L1448,817 L1405.5,817 Z" fill="#939393"/>
<path d="M1412,790 C1418,777 1430,772.5 1448,772.6 L1448,780.3 C1435,780.5 1428,785 1425.6,790.4 Z" fill="#c4c4c4"/>
<path d="M1425.6,790.4 C1428,783 1436,780.3 1448,780.3 L1448,816 L1428.4,816 Z" fill="#b6b6b6"/>
<path d="M1405,816.5 L1448,814 L1448,821 L1405,821 Z" fill="#8e8e8e"/>
<path d="M325,979 L1448,979.5" stroke="#98cde0" stroke-width="1.8" opacity="0.9"/>
<path d="M325,1189 L1448,1190.5" stroke="#98cde0" stroke-width="1.8" opacity="0.9"/>
<g clip-path="url(#cOpen)"><path d="M663.5,1136 C667,1128 678,1124.3 705,1124.2 L1297.4,1124.7 C1330,1125 1365,1128 1373.1,1134.9 L1327.7,1280.6 C1322,1292 1310,1300 1259.6,1314.7 C1230,1320 1210,1322.2 1150,1323 L720.5,1322 C680,1318 650,1312 640.4,1304.3 C625,1295 618,1290 618.4,1276.3 Z" fill="#fddca6"/><g clip-path="url(#cOrange)"><path d="M325,1189 L1448,1190.5" stroke="#d4c58e" stroke-width="1.8"/></g></g>
</svg>
<svg style="left:0;top:0" width="1448" height="1644" viewBox="0 0 1448 1644">
<g fill="none" stroke="#1e1e1e" stroke-width="1.5" stroke-linejoin="round" stroke-linecap="round">
<path d="M1448,665.5 L900,666.8 C800,668 720,671 680,675.2 C640,679 590,690 562.9,701.4 C545,708 530,714 521.4,718 C512,723 506,728 503.5,733.2 C501,738 499.5,741 498.5,744 L464,848.5"/>
<path d="M526.3,850.3 L561.5,741.5 C566,730 580,721 600,713 C630,702 660,695 700,690 C760,684 830,680.5 900,680 L1202.8,681.6 C1290,684 1350,694 1384.6,699.5 C1410,708 1430,718 1441.8,726.7 C1447,733 1447,738 1444.4,742.3"/>
<path d="M840.7,680.5 C840,700 839.5,715 839.5,727"/>
<path d="M1204.7,681.6 L1204.2,727.5"/>
<path d="M753,752 C758,737 768,729.4 790,729 L1259.6,727.4 C1275,730 1284,745 1287.3,757.9"/>
<path d="M753.8,728 L1287.3,729.3"/>
<path d="M755.7,804 L1285.5,802.5"/>
<path d="M845.7,728.5 C846.5,770 846.5,800 847,820.5"/>
<path d="M463.9,849.7 L527,849.7"/>
<path d="M463.9,856.3 L526.1,856.3"/>
<path d="M526.1,856.3 C538,858 543.3,866 543.3,877 L538.3,1244.2 C539,1268 548,1290 568.3,1304.3 C578,1311 590,1314.3 602.4,1314.3 L1448,1316.6"/>
<path d="M527,849.7 C547.7,852 558,865 563.2,887.3 L559.5,1246.2 C563,1272 578,1288 604.4,1290.3 L1392,1292 L1394,1294 L1448,1294.5"/>
<path d="M544.2,880.4 C550,881 556,882.5 563.2,887.3"/>
<path d="M538.3,1245.6 L559.5,1246.2"/>
<path d="M603.6,1290.3 L603.2,1314.3"/>
<path d="M604,1296.8 L1448,1297.5"/>
<path d="M463.1,851.1 C455,854 446,860 440,868 C438,870.5 436,874 433.8,879 L409.4,953.8 C407,962 404,975 403.4,990 L392.1,1240.2 L386.1,1556.6 L382.1,1564.7 L380.1,1566.7 L380.1,1582.7 L448.2,1582.7 C453,1582 456,1580 458.5,1579.6 L1448,1579.6"/>
<path d="M437.5,876 L412.6,955 C409.5,964 407,977 406.3,991 L395,1240.2 L389.5,1492 C389,1520 388.3,1545 386.1,1556.6"/>
<path d="M382.1,1564.7 L442.2,1564.7"/>
<path d="M561.5,741.5 C578,741 592,753 599.9,772.2"/>
<path d="M463.1,851.1 L451,1070 L442.2,1464.5 L441.5,1564.7 C443,1574 448,1578 458.5,1579.6"/>
<path d="M410.4,956.4 L456.1,956.4"/>
<path d="M403.5,992.7 L453.6,992.7"/>
<path d="M388,1423.7 L441.9,1423.7"/>
<path d="M387,1492.6 L440.5,1492.6"/>
<path d="M386.1,1554.6 L440.2,1554.6"/>
<path d="M442.2,1464.2 L1448,1464.8"/>
<path d="M563.2,887.3 L599.9,772.2 C602,770 606,767 610.2,766"/>
<path d="M564.5,933 L597.5,829"/>
<path d="M599.9,772.2 L601.5,811.5 C605,809 609,807 612.8,806.9"/>
<path d="M597.8,828.2 L614.4,822.6"/>
<path d="M595.7,843.7 C600,841 607,840 614.4,839.6"/>
<path d="M608,737.7 C640,725 690,710 733.6,705.9 C745,707 752,715 752.3,725.9 L753,770 L755.7,890 L760.6,985 C760.5,992 758.5,995 756,997 C752,1000 748,1001.5 746,1001.5 C720,1005 700,1010 686.7,1012.6 C670,1018 660,1022 656.3,1023.6 C650,1025.5 645,1025.7 645.2,1025.7 L628,1023.5 C623,1021 621.8,1018 621.8,1018.1 L617.6,818.5 L612.8,807.4 L608,737.7"/>
<path d="M608,737.7 C615,745 622,755 624.5,759.1 C630,775 634,790 635.6,797.7 L648,890 L663.2,1013.3"/>
<path d="M733.6,705.9 L742,772.9 L747.5,890 L750.2,998.8"/>
<path d="M613.5,806.7 C620,805 630,803 635.6,801.9 C650,795 700,783 754.4,774.3"/>
<path d="M613.5,803.3 C620,802 630,800 635.6,799.1"/>
<path d="M617.8,818.5 L623.1,880 L639.7,1023.6"/>
<path d="M1287.3,729.3 C1288,718 1292,709 1304.1,706.6 C1330,709 1380,720 1410.6,738.4 C1405,745 1400,752 1397.6,757.9 C1392,770 1388,780 1387.2,783.9 C1385,792 1383.5,800 1383.3,803.3 L1378.2,860 L1363.4,1013.7"/>
<path d="M1287.3,729.3 L1286,776 L1284.7,868 L1281.7,985.4 C1282,992 1285,997 1286,997.7 C1290,1001 1292,1002 1294.6,1002.6 L1325.3,1008.7 L1356,1014.9 C1362,1018 1366,1021 1368.3,1022.3 C1372,1025 1376,1027 1380.6,1027.2 L1399.1,1026 C1402,1024 1403.5,1022 1404,1019.8 L1405.2,983 L1405.4,806 L1407.2,768.7 L1410.6,738.4"/>
<path d="M1306.1,707.3 L1295.1,770.9 L1292.5,868 L1290.3,997.7"/>
<path d="M1401.5,860 L1385,1024.7"/>
<path d="M1286,776.1 C1300,778 1320,782 1337.9,785.2 C1360,792 1375,800 1383.3,802 C1390,804 1400,805.5 1405.4,806"/>
<path d="M1286,770.9 L1295.1,771.5 M1384.6,800.1 C1392,802 1400,803.5 1405.4,804"/>
<path d="M1446.2,742 C1444,755 1440,765 1439.3,772 L1441.1,814"/>
<path d="M1408.3,770.3 C1415,755 1430,746 1446.2,742.5"/>
<path d="M1407.4,790.4 C1412,775 1428,764 1448,761.2"/>
<path d="M1412.8,781.2 C1418,772 1432,763 1448,762.5"/>
<path d="M1414.7,816.8 L1411.5,790.4 C1414,781 1425,772.5 1448,772.6"/>
<path d="M1425.6,790.4 C1428,783 1436,780.3 1448,780.3"/>
<path d="M1425.6,790.4 L1428.4,816 L1405.5,816.8"/>
<path d="M1428.4,816 L1448,815"/>
</g>
</svg>
<svg style="left:0;top:0" width="1448" height="1644" viewBox="0 0 1448 1644">
<path d="M324.6,859.3 L366.9,859.3 L366.9,902.6 L324.6,902.6" fill="#fff" stroke="#d6d6d6" stroke-width="1.3"/>
<g fill="none" stroke="#333" stroke-width="1.5"><path d="M333.3,872.4 L337.1,875.5 L340.8,872.4"/><path d="M337.1,878.2 L337.1,894.3"/><path d="M344.1,873 L356.7,873 M340,879.6 L356.7,879.6 M340,886.3 L356.7,886.3 M340,892.9 L356.7,892.9"/></g>
<path d="M617.2,1146.1 C650,1128 700,1116 746.6,1112.8 L762.6,1122.1 C730,1125 690,1138 665.3,1148.9 Z" fill="#d9dee3" fill-opacity="0.85"/>
<path d="M1284.2,1122.9 L1323.9,1106.5 C1380,1115 1425,1128 1448,1145.6 L1414,1147.6 L1364,1150.7 C1350,1135 1320,1125 1284.2,1122.9 Z" fill="#d9dee3" fill-opacity="0.85"/>
<path d="M1404,985.4 C1420,990 1435,998 1445.8,1008.7 L1412,1010 L1405,1010 Z" fill="#d5dade" fill-opacity="0.8"/>
<g clip-path="url(#cOrange)"><path d="M617.2,1146.1 C650,1128 700,1116 746.6,1112.8 L762.6,1122.1 C730,1125 690,1138 665.3,1148.9 Z" fill="#e8c896"/><path d="M1284.2,1122.9 L1323.9,1106.5 C1380,1115 1425,1128 1448,1145.6 L1414,1147.6 L1364,1150.7 C1350,1135 1320,1125 1284.2,1122.9 Z" fill="#e8c896"/></g>
<path d="M663.5,1136 C667,1128 678,1124.3 705,1124.2 L1297.4,1124.7 C1330,1125 1365,1128 1373.1,1134.9 L1327.7,1280.6 C1322,1292 1310,1300 1259.6,1314.7 C1230,1320 1210,1322.2 1150,1323 L720.5,1322 C680,1318 650,1312 640.4,1304.3 C625,1295 618,1290 618.4,1276.3 Z" fill="none" stroke="#f0a52c" stroke-width="1.6"/>
<g fill="none" stroke="#6f767c" stroke-width="1.6">
<path d="M606.4,1160.1 L617.2,1146.1"/>
<path d="M617.2,1146.1 C650,1128 700,1116 746.6,1112.8 C780,1110 820,1108 845.5,1108"/>
<path d="M617.2,1146.1 L665.3,1148.9"/>
<path d="M665.3,1148.9 C690,1138 730,1125 762.6,1122.1"/>
<path d="M746.6,1112.8 L762.6,1122.1"/>
<path d="M1213.4,1100.8 C1250,1101 1290,1103 1323.9,1106.5 C1380,1115 1425,1128 1448,1146.2"/>
<path d="M1209.7,1109.5 C1240,1110 1280,1112 1306.4,1114.3 C1350,1125 1390,1135 1414,1147.6"/>
<path d="M1284.2,1122.9 C1320,1125 1350,1135 1364,1150.7"/>
<path d="M1284.2,1123.5 L1323.9,1106.5"/>
<path d="M1364,1150.7 L1414,1147.6 L1448,1145.6"/>
<path d="M1414,1147.6 L1415.4,1162"/>
<path d="M1206.6,1106.5 L1213.4,1100.8"/>
<path d="M1384.6,699.5 C1375,703 1368,710 1363.9,716.4"/>
</g>
<g fill="none" stroke="#6f767c" stroke-width="1.4" stroke-dasharray="7,4">
<path d="M642.4,1317.1 L699.7,1318"/>
<path d="M640.4,1323.5 L699.7,1323.5"/>
<path d="M1217.2,1324.1 L1276.6,1324.1"/>
<path d="M1222,1317.7 L1278.5,1317.7"/>
</g>
<g fill="none" stroke="#6f767c" stroke-width="1.4" stroke-dasharray="9,3,2,3">
<path d="M692.5,1306.3 L699.7,1318 C730,1325 760,1328 779.8,1328.3"/>
<path d="M1134.7,1329 C1170,1326 1205,1322 1235,1307.1"/>
<path d="M1215,1106 C1240,1107 1270,1112 1284.2,1122.9"/>
</g>
<path d="M1363.9,716.4 C1350,740 1342,770 1340.5,786.5 L1337.9,868 L1332,1000" fill="none" stroke="#8a949c" stroke-width="1.5" opacity="0.8"/>
<path d="M1366.5,716.4 L1366.5,780.6 M1356,745 L1357,782" fill="none" stroke="#7d868d" stroke-width="1.2" stroke-dasharray="4,3" opacity="0.8"/>
<circle cx="606.4" cy="1160.1" r="3.1" fill="#6f767c"/>
<circle cx="617.2" cy="1146.1" r="3.1" fill="#6f767c"/>
<circle cx="746.6" cy="1112.8" r="3.1" fill="#6f767c"/>
<circle cx="762.6" cy="1122.1" r="3.1" fill="#6f767c"/>
<circle cx="845.5" cy="1108" r="3.1" fill="#6f767c"/>
<circle cx="1212.8" cy="1100.3" r="3.1" fill="#6f767c"/>
<circle cx="1206" cy="1106.5" r="3.1" fill="#6f767c"/>
<circle cx="1209.7" cy="1109.5" r="3.1" fill="#6f767c"/>
<circle cx="1323.9" cy="1106.5" r="3.1" fill="#6f767c"/>
<circle cx="1306.4" cy="1114.3" r="3.1" fill="#6f767c"/>
<circle cx="1284.2" cy="1122.9" r="3.1" fill="#6f767c"/>
<circle cx="1414" cy="1147.6" r="3.1" fill="#6f767c"/>
<circle cx="1415.4" cy="1162" r="3.1" fill="#6f767c"/>
<circle cx="642.4" cy="1317.1" r="3.1" fill="#6f767c"/>
<circle cx="640.4" cy="1323.5" r="3.1" fill="#6f767c"/>
<circle cx="692.5" cy="1306.3" r="3.1" fill="#6f767c"/>
<circle cx="699.7" cy="1323.5" r="3.1" fill="#6f767c"/>
<circle cx="786.6" cy="1306.3" r="3.1" fill="#6f767c"/>
<circle cx="779.8" cy="1328.3" r="3.1" fill="#6f767c"/>
<circle cx="1142.2" cy="1306.3" r="3.1" fill="#6f767c"/>
<circle cx="1235" cy="1307.1" r="3.1" fill="#6f767c"/>
<circle cx="1134.7" cy="1329" r="3.1" fill="#6f767c"/>
<circle cx="1217.2" cy="1324.1" r="3.1" fill="#6f767c"/>
<circle cx="1276.6" cy="1324.1" r="3.1" fill="#6f767c"/>
<circle cx="1278.5" cy="1317.7" r="3.1" fill="#6f767c"/>
<circle cx="1384.6" cy="699.5" r="3.1" fill="#7d868d"/>
<circle cx="1363.9" cy="716.4" r="3.1" fill="#7d868d"/>
<circle cx="1355.4" cy="741" r="3.1" fill="#7d868d"/>
<circle cx="1356.1" cy="782.6" r="3.1" fill="#7d868d"/>
<circle cx="1366.5" cy="780.6" r="3.1" fill="#7d868d"/>
<circle cx="828.7" cy="1160.9" r="3.1" fill="#9c7c52"/>
<circle cx="842.7" cy="1160.9" r="3.1" fill="#9c7c52"/>
<circle cx="1179.3" cy="1161.4" r="3.1" fill="#9c7c52"/>
<circle cx="1193.3" cy="1161.4" r="3.1" fill="#9c7c52"/>
<circle cx="1199.8" cy="1126.2" r="3.1" fill="#9c7c52"/>
<circle cx="1283" cy="1129.2" r="3.1" fill="#9c7c52"/>
<circle cx="1364" cy="1150.7" r="3.1" fill="#9c7c52"/>
<circle cx="665.3" cy="1148.9" r="3.1" fill="#9c7c52"/>
<g fill="none" stroke="#111" stroke-width="2.2" stroke-linecap="round">
<path d="M603.8,1023.6 L614.2,1008.5 L663.2,1013.3"/>
<path d="M663.2,1013.3 C690,1003 730,992 760.6,985.7"/>
<path d="M753,975.3 C780,973 810,972 842.7,971.7"/>
<path d="M1210.4,963.6 C1240,965 1260,966 1283,966.5"/>
<path d="M1208.5,972.3 C1240,973 1260,974 1283,975.5"/>
<path d="M1281.1,986.6 C1310,992 1340,1000 1361,1013.7 L1412,1010 L1445.8,1008.7"/>
<path d="M1412,1010 L1413.2,1024.7"/>
<path d="M1404,985.4 C1420,990 1435,998 1445.8,1008.7"/>
</g>
<g fill="none" stroke="#3a3a3a" stroke-width="2" opacity="0.7">
<path d="M614.2,1008.5 C640,995 690,983 744,975.3"/>
<path d="M663.2,1013.3 C690,1006 730,995 758,989"/>
<path d="M1283,966.5 L1327.8,970"/>
<path d="M1283,975.5 C1320,978 1370,982 1404,985.4"/>
<path d="M1297,976 L1322,970"/>
</g>
<circle cx="603.8" cy="1023.6" r="3.8" fill="#111"/>
<circle cx="614.2" cy="1008.5" r="3.8" fill="#111"/>
<circle cx="663.2" cy="1013.3" r="3.8" fill="#111"/>
<circle cx="760.6" cy="985.7" r="3.8" fill="#111"/>
<circle cx="842.7" cy="971.7" r="3.8" fill="#111"/>
<circle cx="1210.4" cy="963.6" r="3.8" fill="#111"/>
<circle cx="1208.5" cy="972.3" r="3.8" fill="#111"/>
<circle cx="1281.1" cy="986.6" r="3.8" fill="#111"/>
<circle cx="1361" cy="1013.7" r="3.8" fill="#111"/>
<circle cx="1412" cy="1010" r="3.8" fill="#111"/>
<circle cx="1413.2" cy="1024.7" r="3.8" fill="#111"/>
<circle cx="1445.8" cy="1008.7" r="3.8" fill="#111"/>
<circle cx="825.9" cy="1023.7" r="3.8" fill="#111"/>
<circle cx="839.9" cy="1023.7" r="3.8" fill="#111"/>
<circle cx="1177.1" cy="1024.2" r="3.8" fill="#111"/>
<circle cx="1190.7" cy="1024.2" r="3.8" fill="#111"/>
<circle cx="744" cy="975.3" r="3.6" fill="#555" opacity="0.8"/>
<circle cx="1322" cy="970" r="3.6" fill="#555" opacity="0.8"/>
<path d="M988.7,1056 L988.7,1080" stroke="#1414c8" stroke-width="3"/>
<path d="M945.9,1084.9 L961.4,1084.9" stroke="#cc1414" stroke-width="2.6"/>
<ellipse cx="989.4" cy="1084.9" rx="23.2" ry="5.6" fill="none" stroke="#29414e" stroke-width="2"/>
<path d="M1007,1084 C1000,1081 985,1081 972.8,1083 L972.8,1084.9 L989.4,1085.4 L988.7,1089.5" fill="none" stroke="#29414e" stroke-width="1.8"/>
<path d="M987.3,1091 L986,1095.2" stroke="#2a9a2a" stroke-width="2"/>
</svg>
<div class="a" style="left:362px;top:133.3px;width:294px;height:289.5px;background:#fff;box-shadow:0 3px 9px rgba(0,0,0,0.28);"></div>
<div class="a" style="left:362px;top:170.3px;width:294px;height:1.3px;background:#d5d5d5;"></div>
<div class="t" style="left:371px;top:144.8px;font-size:15.86px;color:#2b2b2b;font-weight:bold;font-style:normal;">POKE TAB TOP</div>
<div class="a" style="left:580.2px;top:133.3px;width:36.5px;height:36.5px;background:#0e9a0e;"></div>
<div class="a" style="left:367.2px;top:178.6px;width:248px;height:57px;border:1px solid #dedede;border-radius:2px;"></div>
<div class="t" style="left:374.9px;top:188.5px;font-size:13.08px;color:#7d7d7d;font-weight:normal;font-style:normal;">Sketch plane</div>
<div class="t" style="left:376.5px;top:210.8px;font-size:17.48px;color:#2b2b2b;font-weight:bold;font-style:normal;">Mate connector</div>
<div class="a" style="left:367.6px;top:253.39999999999998px;width:15.5px;height:15.5px;border:1px solid #d6d6d6;border-radius:2px;background:#fff;"></div>
<div class="t" style="left:389px;top:252.3px;font-size:17.62px;color:#7a7a7a;font-weight:normal;font-style:normal;">Disable imprinting</div>
<div class="a" style="left:367.6px;top:289.5px;width:15.5px;height:15.5px;border:1px solid #d6d6d6;border-radius:2px;background:#fff;"></div>
<div class="t" style="left:389px;top:288.5px;font-size:17.51px;color:#7a7a7a;font-weight:normal;font-style:normal;">Show constraints</div>
<div class="a" style="left:367.6px;top:325.3px;width:15.5px;height:15.5px;border:1px solid #d6d6d6;border-radius:2px;background:#fff;"></div>
<div class="t" style="left:389px;top:324.6px;font-size:17.1px;color:#7a7a7a;font-weight:normal;font-style:normal;">Show expressions</div>
<div class="a" style="left:367.6px;top:361.7px;width:15.5px;height:15.5px;background:#1f56b8;border-radius:3px;"></div>
<div class="t" style="left:389px;top:361.1px;font-size:17.06px;color:#7a7a7a;font-weight:normal;font-style:normal;">Show overdefined</div>
<div class="a" style="left:551.7px;top:387.8px;width:72px;height:34.5px;border:4px solid #c9c9c9;border-radius:7px;background:#fff;"></div>
<div class="a" style="left:555.5px;top:391.5px;width:64.5px;height:27px;border:1px solid #b9b9b9;border-radius:3px;background:#efefef;"></div>
<div class="t" style="left:570.3px;top:399.0px;font-size:15.55px;color:#333;font-weight:normal;font-style:normal;">Final</div>
<svg style="left:0;top:0" width="1448" height="620" viewBox="0 0 1448 620"><path d="M589.5,151.5 L596,158 L607.5,145.5" fill="none" stroke="#fff" stroke-width="3.6" stroke-linecap="square"/><path d="M628.5,146.5 L642,159 M642,146.5 L628.5,159" stroke="#d2202a" stroke-width="3.2"/><circle cx="571" cy="220.5" r="9" fill="none" stroke="#333" stroke-width="1.5"/><path d="M566.95,214.65 L566.95,223.2 L576.85,223.2" fill="none" stroke="#333" stroke-width="1.5"/><circle cx="571" cy="220.5" r="6.8" fill="none" stroke="#333" stroke-width="0.8"/><circle cx="632.8" cy="194.5" r="11.2" fill="none" stroke="#333" stroke-width="1.6"/><path d="M627.76,187.22 L627.76,197.86 L640.0799999999999,197.86" fill="none" stroke="#333" stroke-width="1.6"/><circle cx="632.8" cy="194.5" r="9.0" fill="none" stroke="#333" stroke-width="0.8"/><path d="M590.5,216.5 L598.5,224.5 M598.5,216.5 L590.5,224.5" stroke="#c4c4c4" stroke-width="1.4"/><path d="M371.5,369.7 L374.3,372.7 L379.5,366.7" fill="none" stroke="#fff" stroke-width="2"/><circle cx="639.5" cy="408.4" r="8" fill="#bdbdbd"/><text x="639.5" y="412.7" font-family="Liberation Sans" font-size="12" font-weight="bold" text-anchor="middle" fill="#fff">?</text></svg>
<div class="a" style="left:655.5px;top:133.3px;width:290px;height:465.6px;background:#fff;box-shadow:0 3px 9px rgba(0,0,0,0.28);"></div>
<div class="a" style="left:655.5px;top:170.6px;width:290px;height:1.3px;background:#d5d5d5;"></div>
<div class="t" style="left:663.9px;top:144.5px;font-size:16.2px;color:#2b2b2b;font-weight:bold;font-style:normal;">Mate connector</div>
<div class="t" style="left:663.9px;top:180.5px;font-size:17.89px;color:#2b2b2b;font-weight:normal;font-style:normal;">On entity</div>
<div class="a" style="left:655.5px;top:204.3px;width:256.5px;height:1.1px;background:#e0e0e0;"></div>
<div class="a" style="left:659.4px;top:215.5px;width:282.3px;height:57px;background:#daedf8;border:1.5px solid #2f63b4;border-radius:3px;"></div>
<div class="t" style="left:667.6px;top:225.5px;font-size:13.25px;color:#6e7d89;font-weight:normal;font-style:normal;">Origin entity</div>
<div class="t" style="left:669.2px;top:247.9px;font-size:17.28px;color:#2b2b2b;font-weight:normal;font-style:normal;">Face of reversed cartridge</div>
<div class="a" style="left:661px;top:290.6px;width:15.5px;height:15.5px;border:1px solid #d6d6d6;border-radius:2px;background:#fff;"></div>
<div class="t" style="left:682px;top:290.1px;font-size:16.93px;color:#7a7a7a;font-weight:normal;font-style:normal;">Realign</div>
<div class="a" style="left:661px;top:326.8px;width:15.5px;height:15.5px;background:#1f56b8;border-radius:3px;"></div>
<div class="t" style="left:682px;top:326.7px;font-size:16.44px;color:#7a7a7a;font-weight:normal;font-style:normal;">Move</div>
<div class="a" style="left:661px;top:536.8px;width:15.5px;height:15.5px;border:1px solid #d6d6d6;border-radius:2px;background:#fff;"></div>
<div class="t" style="left:682px;top:535.9px;font-size:17.41px;color:#7a7a7a;font-weight:normal;font-style:normal;">Owner entity</div>
<div class="t" style="left:658.5px;top:360.1px;font-size:20px;color:#8e97a1;font-weight:normal;font-style:normal;transform:scaleX(0.85);transform-origin:0 0;">X</div>
<div class="t" style="left:862.8px;top:362.1px;font-size:17.56px;color:#2b2b2b;font-weight:normal;font-style:normal;">0 mm</div>
<div class="a" style="left:689.7px;top:385.2px;width:221.7px;height:1.1px;background:#e0e0e0;"></div>
<div class="t" style="left:658.5px;top:395.3px;font-size:20px;color:#8e97a1;font-weight:normal;font-style:normal;transform:scaleX(0.85);transform-origin:0 0;">Y</div>
<div class="t" style="left:862.8px;top:397.3px;font-size:17.56px;color:#2b2b2b;font-weight:normal;font-style:normal;">0 mm</div>
<div class="a" style="left:689.7px;top:419.9px;width:221.7px;height:1.1px;background:#e0e0e0;"></div>
<div class="t" style="left:658.5px;top:429.1px;font-size:20px;color:#8e97a1;font-weight:normal;font-style:normal;transform:scaleX(0.85);transform-origin:0 0;">Z</div>
<div class="t" style="left:854.4px;top:431.5px;font-size:17.11px;color:#2b2b2b;font-weight:normal;font-style:normal;">15 mm</div>
<div class="a" style="left:689.7px;top:453.7px;width:221.7px;height:1.1px;background:#e0e0e0;"></div>
<div class="t" style="left:663.9px;top:463.5px;font-size:17.76px;color:#2b2b2b;font-weight:normal;font-style:normal;">Rotate about Z</div>
<div class="a" style="left:655.5px;top:487.8px;width:256.5px;height:1.1px;background:#e0e0e0;"></div>
<div class="t" style="left:662.5px;top:505.1px;font-size:15.43px;color:#8a8a8a;font-weight:normal;font-style:normal;">Rotation angle</div>
<div class="t" style="left:865px;top:503.9px;font-size:16.95px;color:#2b2b2b;font-weight:normal;font-style:normal;">0 deg</div>
<div class="a" style="left:768.6px;top:524.4px;width:142.4px;height:1.1px;background:#e0e0e0;"></div>
<svg style="left:0;top:0" width="1448" height="620" viewBox="0 0 1448 620"><path d="M921,145.8 L934.2,159 M934.2,145.8 L921,159" stroke="#666" stroke-width="1.5"/><path d="M893,184.7 L903.4,184.7 L898.2,190.5 Z" fill="#333"/><path d="M893,468 L903.4,468 L898.2,473.8 Z" fill="#333"/><path d="M915.5,253.5 L923.5,261.5 M923.5,253.5 L915.5,261.5" stroke="#a9b5bd" stroke-width="1.4"/><path d="M664.5,331 L667.3,334 L672.5,328" fill="none" stroke="#fff" stroke-width="2"/><path d="M675,365 L685.5,375.5 M685.5,369 L685.5,375.5 L679,375.5" fill="none" stroke="#d2202a" stroke-width="1.8"/><path d="M675,410.5 L685.5,400 M679,400 L685.5,400 L685.5,406.5" fill="none" stroke="#1a9a1a" stroke-width="1.8"/><path d="M680.5,446 L680.5,432 M675.5,437 L680.5,432 L685.5,437" fill="none" stroke="#1f2fc8" stroke-width="1.8"/><path d="M660.5,590.5 L668,574 L672,578 L684.5,568 L676,582 L679.5,585 Z" fill="#222"/><path d="M662,576 L667.5,570.5" stroke="#999" stroke-width="1"/><circle cx="706.7" cy="578.5" r="10.5" fill="none" stroke="#222" stroke-width="1.3"/><path d="M698,572 L696.5,568.5 L700.5,569" fill="none" stroke="#222" stroke-width="1.3"/><circle cx="706.7" cy="568" r="1.8" fill="#fff" stroke="#222" stroke-width="0.9"/><circle cx="696.2" cy="578.5" r="1.8" fill="#fff" stroke="#222" stroke-width="0.9"/><circle cx="717.2" cy="578.5" r="1.8" fill="#fff" stroke="#222" stroke-width="0.9"/><circle cx="706.7" cy="589" r="1.8" fill="#fff" stroke="#222" stroke-width="0.9"/><circle cx="931.3" cy="585.2" r="8" fill="#bdbdbd"/><text x="931.3" y="589.5" font-family="Liberation Sans" font-size="12" font-weight="bold" text-anchor="middle" fill="#fff">?</text></svg>
<svg style="left:0;top:0" width="1448" height="110" viewBox="0 0 1448 110">
<defs>
<g id="chev"><path d="M-6,-3 L0,3 L6,-3" fill="none" stroke="#222" stroke-width="2.6" stroke-linejoin="miter"/></g>
</defs>
<!-- undo / redo -->
<path d="M68,80 L75,74.5 L75,78 Q84,78 84.5,86 Q84.5,91 82.5,94 Q82,88 75,86.5 L75,89.5 Z" fill="#9a9a9a"/>
<path d="M130.5,80 L123.5,74.5 L123.5,78 Q114.5,78 114,86 Q114,91 116,94 Q116.5,88 123.5,86.5 L123.5,89.5 Z" fill="#9a9a9a"/>
<rect x="146.2" y="68" width="1.6" height="33" fill="#d6d6d6"/>
<!-- extrude -->
<g stroke="#222" stroke-width="1.4" stroke-linejoin="round">
<path d="M161,75 L163,73 L182,73 L184,75 L184,95.5 L163,95.5 L161,93.5 Z" fill="#fff"/>
<path d="M161,75 L163,77 L182,77 L184,75 M163,77 L163,95.5" fill="none"/>
<path d="M168,82 L170,80 L184,80 L184,95.5 L168,95.5 Z" fill="#9c9c9c"/>
<path d="M168,82 L184,82 M170,80 L170,82" fill="none" stroke-width="1"/>
</g>
<!-- revolve -->
<path d="M217.5,73.5 A11.5,11.5 0 1 0 228.5,89 L221,85.5 L221,81 L228.5,77.5 A11.5,11.5 0 0 0 217.5,73.5 Z" fill="#999" stroke="#222" stroke-width="1.5"/>
<ellipse cx="224.5" cy="79.5" rx="2.6" ry="3.6" transform="rotate(40 224.5 79.5)" fill="#fff" stroke="#222" stroke-width="1"/>
<ellipse cx="224.5" cy="88" rx="2.6" ry="3.6" transform="rotate(-40 224.5 88)" fill="#fff" stroke="#222" stroke-width="1"/>
<path d="M210,84 L230,84" stroke="#222" stroke-width="1" stroke-dasharray="2,1.5"/>
<rect x="241.5" y="67.5" width="1.6" height="34" fill="#d6d6d6"/>
<!-- line -->
<g fill="#fff" stroke="#3b6bc1" stroke-width="1.2">
<path d="M258,94 L276.5,75.5" stroke="#222" stroke-width="1.6"/>
<circle cx="257.6" cy="93.8" r="2.3"/><circle cx="276.6" cy="75.4" r="2.3"/>
<!-- rect -->
<rect x="302.5" y="75.5" width="19.5" height="18.5" fill="none" stroke="#222" stroke-width="1.6"/>
<circle cx="302.6" cy="93.8" r="2.3"/><circle cx="321.6" cy="75.5" r="2.3"/>
<!-- circle -->
<circle cx="380.6" cy="84.4" r="11.3" fill="none" stroke="#222" stroke-width="1.6"/>
<circle cx="380.6" cy="84.4" r="2"/><circle cx="388.5" cy="76.3" r="2.2"/>
<!-- arc -->
<path d="M438.5,89 A11,11 0 0 1 460.5,89" fill="none" stroke="#222" stroke-width="1.6"/>
<circle cx="438.6" cy="89.3" r="2.3"/><circle cx="460.5" cy="89.3" r="2.3"/><circle cx="449.5" cy="77.5" r="2.3"/>
<path d="M449.5,84 L449.5,90 M446.5,87 L452.5,87" stroke="#222" stroke-width="1.3"/>
<!-- polygon -->
<path d="M518,74.5 L528.5,82 L524.5,94.5 L511.5,94.5 L507.5,82 Z" fill="none" stroke="#222" stroke-width="1.6"/>
<circle cx="518" cy="84.5" r="2"/><circle cx="525.2" cy="77.5" r="2.2"/>
<!-- spline -->
<path d="M577,93.5 Q580,87 586.5,84.3 Q593,82 596.5,75.5" fill="none" stroke="#222" stroke-width="1.5"/>
<circle cx="577" cy="93.5" r="2.2"/><circle cx="586.5" cy="84.3" r="2.2"/><circle cx="596.5" cy="75" r="2.2"/>
<!-- point -->
<circle cx="655.3" cy="84.4" r="4" stroke-width="1.4"/>
</g>
<!-- text A -->
<rect x="690" y="74" width="22" height="21" fill="none" stroke="#777" stroke-width="0.8" stroke-dasharray="1.5,1.2"/>
<path d="M694,93.5 L700.5,75.5 L703.5,75.5 L710,93.5 L706,93.5 L704.5,89 L699.5,89 L698,93.5 Z M700.5,85.5 L703.5,85.5 L702,80.5 Z" fill="#fff" stroke="#222" stroke-width="1.3" stroke-linejoin="round"/>
<circle cx="711.5" cy="74" r="2.2" fill="#fff" stroke="#3b6bc1" stroke-width="1.1"/>
<circle cx="689.5" cy="94.5" r="2.2" fill="#fff" stroke="#3b6bc1" stroke-width="1.1"/>
<!-- construction cube -->
<path d="M736,77 L739,74 L755,74 L755,94.5 L739,94.5 L736,91.5 Z" fill="none" stroke="#222" stroke-width="1.5"/>
<path d="M736,77 L752,77 L755,74 M752,77 L752,94.5" fill="none" stroke="#222" stroke-width="1.3"/>
<path d="M739.5,78 L739.5,94" stroke="#3b6bc1" stroke-width="2.4"/>
<!-- mirror-ish -->
<path d="M804,74.5 L804,95" stroke="#3b6bc1" stroke-width="2.2"/>
<path d="M812,80 L819,80 M812,80 L814.5,78 M812,80 L814.5,82" stroke="#222" stroke-width="1.4" fill="none"/>
<path d="M811,88.5 L818.5,88.5 M818.5,88.5 L816,86.5 M818.5,88.5 L816,90.5" stroke="#3b6bc1" stroke-width="1.4" fill="none"/>
<path d="M823.5,74.5 L823.5,95" stroke="#222" stroke-width="2.2" stroke-dasharray="3,2.5"/>
<rect x="838" y="67.5" width="1.6" height="34" fill="#d6d6d6"/>
<!-- fillet -->
<path d="M854,95.5 L854,90 Q855,76 874.5,75.5" fill="none" stroke="#222" stroke-width="2"/>
<path d="M853,75.5 L862,75.5 M853,75.5 L853,84" stroke="#777" stroke-width="0.9" stroke-dasharray="1.5,1.2"/>
<!-- scissors -->
<g fill="none" stroke="#222" stroke-width="2">
<circle cx="901.5" cy="90.5" r="3.2"/><circle cx="914.5" cy="90.5" r="3.2"/>
<path d="M903.5,88 L916.5,75 M912.5,88 L899.5,75"/>
</g>
<!-- offset -->
<path d="M969,95 L969,81 Q969,74.5 975,74.5 Q981,74.5 981,81 L981,84 L986,84 L986,95" fill="none" stroke="#3b6bc1" stroke-width="1.4"/>
<path d="M972,95 L972,81.5 Q972,77.5 975,77.5 Q978,77.5 978,81.5 L978,87 L983,87 L983,95 L976,95" fill="none" stroke="#222" stroke-width="1.4"/>
<!-- mirror L -->
<path d="M1035,75 L1035,95 L1045,95 L1045,91 L1039,91 L1039,75 Z" fill="none" stroke="#222" stroke-width="1.7"/>
<path d="M1046.5,75 L1046.5,95" stroke="#222" stroke-width="1.1" stroke-dasharray="1.5,1.5"/>
<path d="M1057.5,75 L1057.5,95 L1048,95 L1048,91 L1053.5,91 L1053.5,75" fill="none" stroke="#3b6bc1" stroke-width="1.4"/>
<!-- pattern -->
<rect x="1081" y="75" width="8" height="8" fill="none" stroke="#222" stroke-width="1.6"/>
<rect x="1093" y="75" width="8" height="8" fill="none" stroke="#3b6bc1" stroke-width="1.6"/>
<rect x="1081" y="87" width="8" height="8" fill="none" stroke="#3b6bc1" stroke-width="1.6"/>
<rect x="1093" y="87" width="8" height="8" fill="none" stroke="#3b6bc1" stroke-width="1.6"/>
<!-- DXF -->
<path d="M1150,74 L1164,74 L1170,80 L1170,95.5 L1150,95.5 Z M1164,74 L1164,80 L1170,80" fill="#fff" stroke="#222" stroke-width="1.4" stroke-linejoin="round"/>
<path d="M1160,76 L1160,84 M1156.5,81 L1160,84.5 L1163.5,81" fill="none" stroke="#222" stroke-width="1.6"/>
<text x="1160" y="93.5" font-family="Liberation Sans" font-size="7" font-weight="bold" text-anchor="middle" fill="#222">DXF</text>
<rect x="1207.5" y="67.5" width="1.6" height="34" fill="#d6d6d6"/>
<!-- dimension -->
<path d="M1225,93 L1241.5,76.5" stroke="#222" stroke-width="2"/>
<path d="M1225,93 L1226,86.5 L1231.5,92 Z M1241.5,76.5 L1240.5,83 L1235,77.5 Z" fill="#222"/>
<path d="M1236.5,74.5 L1239,72.5 L1244.5,77.5 M1222,88 L1224.5,95.5 L1226,94" fill="none" stroke="#333" stroke-width="1"/>
<rect x="1258" y="67.5" width="1.6" height="34" fill="#d6d6d6"/>
<!-- coincident -->
<path d="M1272,93.5 L1292.5,73" stroke="#3b6bc1" stroke-width="1.2"/>
<path d="M1282,83 L1294,95" stroke="#222" stroke-width="2.6"/>
<circle cx="1282.5" cy="83" r="2.5" fill="#222"/>
<!-- concentric -->
<circle cx="1328.3" cy="84.2" r="10" fill="none" stroke="#3b6bc1" stroke-width="1.3"/>
<circle cx="1328.3" cy="84.2" r="5.5" fill="none" stroke="#222" stroke-width="2.4"/>
<!-- parallel -->
<path d="M1362.5,78 L1378,94" stroke="#222" stroke-width="2.6"/>
<path d="M1367.5,73.5 L1383.5,89.5" stroke="#3b6bc1" stroke-width="1.2"/>
<!-- tangent -->
<path d="M1408,93.5 L1427,74.5" stroke="#222" stroke-width="2.6"/>
<circle cx="1421.5" cy="88.5" r="6" fill="none" stroke="#3b6bc1" stroke-width="1.3"/>
<use href="#chev" x="345.2" y="84.5"/>
<use href="#chev" x="414" y="84.5"/>
<use href="#chev" x="482.7" y="84.5"/>
<use href="#chev" x="551" y="84.5"/>
<use href="#chev" x="620" y="84.5"/>
<use href="#chev" x="778" y="84.5"/>
<use href="#chev" x="942" y="84.5"/>
<use href="#chev" x="1010" y="84.5"/>
<use href="#chev" x="1124" y="84.5"/>
<use href="#chev" x="1192.5" y="84.5"/>
</svg>

</body></html>
